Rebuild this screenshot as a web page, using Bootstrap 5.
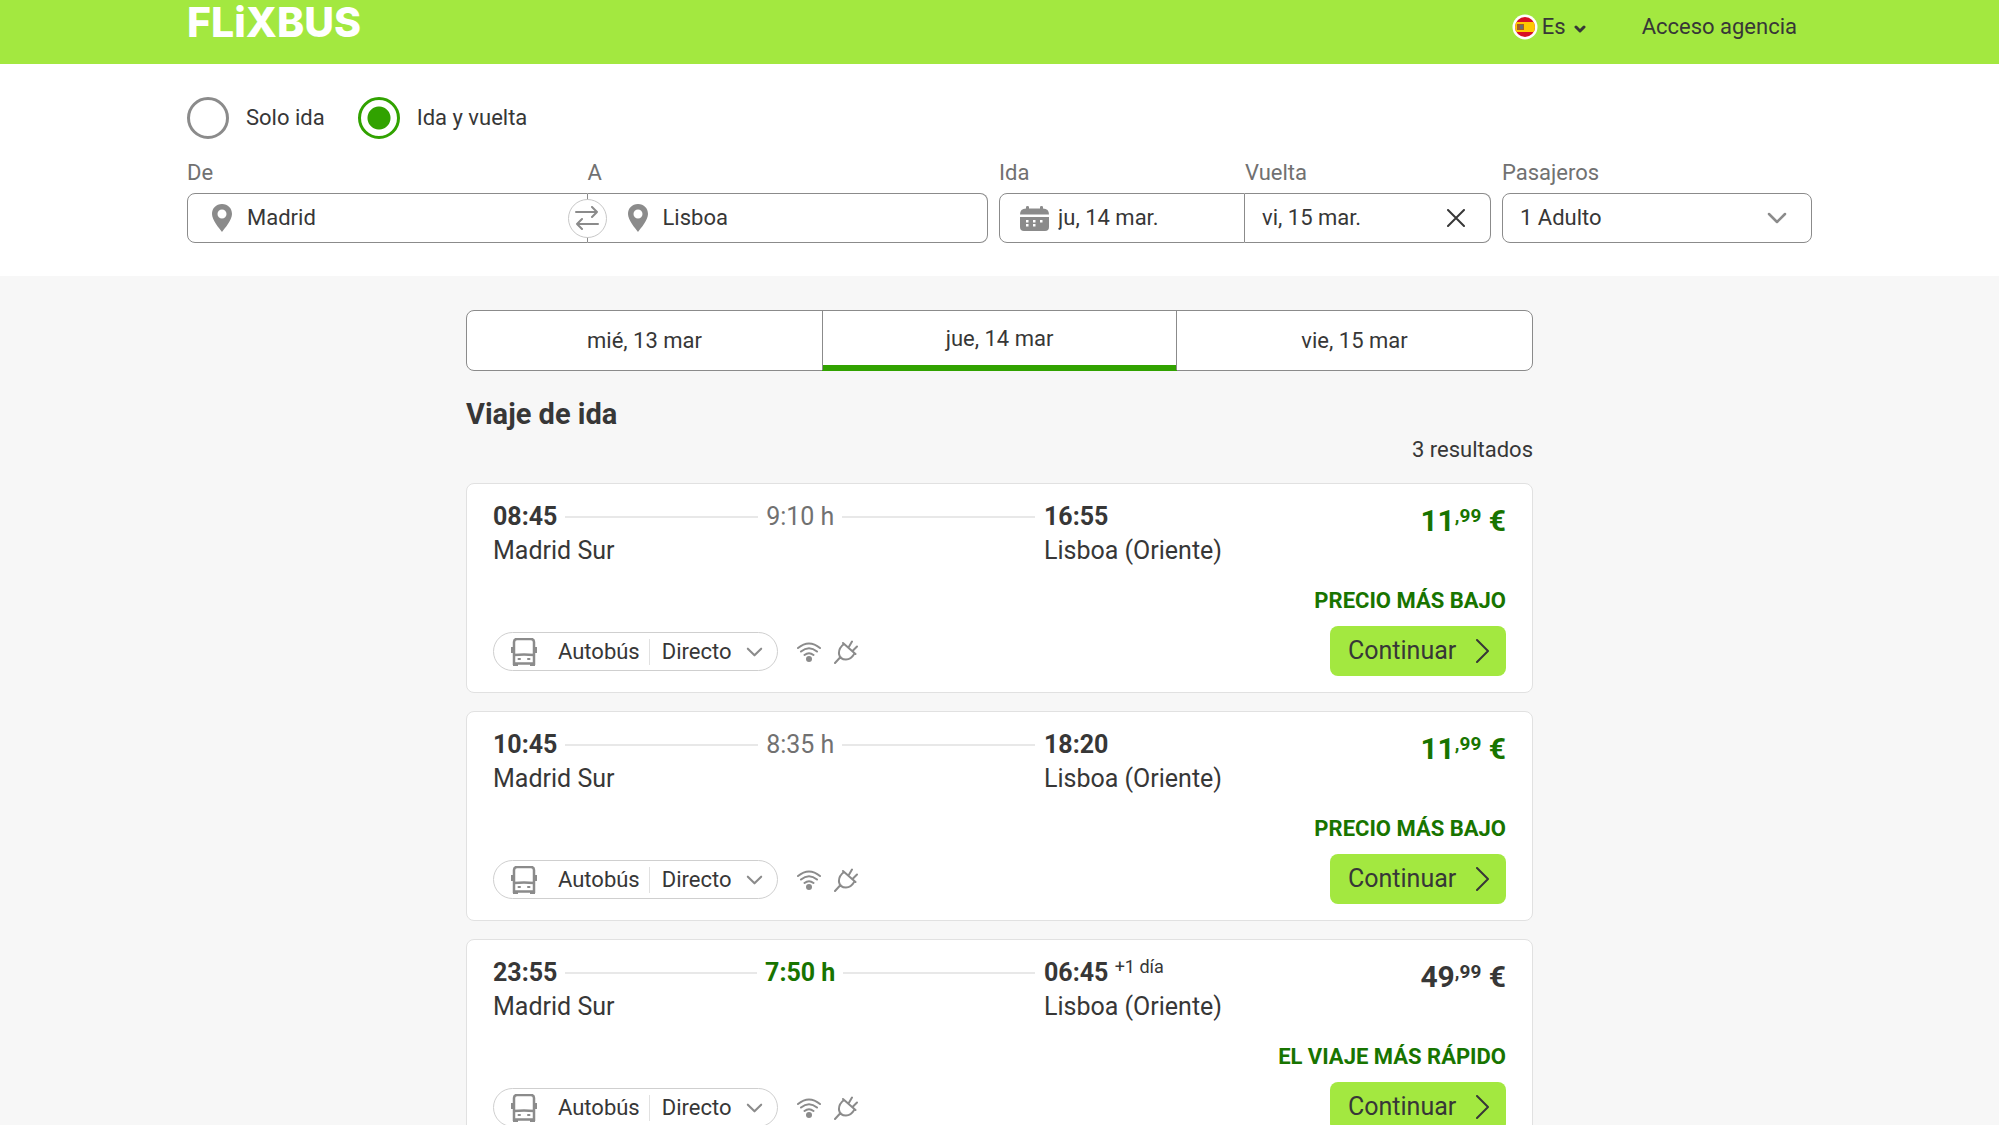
<!DOCTYPE html>
<html lang="es">
<head>
<meta charset="utf-8">
<meta name="viewport" content="width=device-width, initial-scale=1">
<title>FlixBus: Madrid – Lisboa</title>
<link href="https://cdn.jsdelivr.net/npm/bootstrap@5.3.0/dist/css/bootstrap.min.css" rel="stylesheet">
<style>
:root {
  --ink: #373737;
  --muted: #717171;
  --icon: #8b8b8b;
  --lime: #a3e840;
  --green: #31a200;
  --deep: #187400;
  --hairline: #e1e1e1;
}
html { scrollbar-width: none; }
body { font-family: Roboto, "Liberation Sans", sans-serif; font-size: 22px; line-height: 30px; color: var(--ink); background: #f7f7f7; }
svg { display: block; flex: none; fill: none; stroke: currentColor; stroke-linecap: round; stroke-linejoin: round; }
.page-width { width: 100%; max-width: 1625px; margin-inline: auto; }
.results-width { width: 100%; max-width: 1067px; margin-inline: auto; }

.topbar { background: var(--lime); height: 64px; padding: 0; }
.brand { font: 800 41px/44px Inter, "Open Sans", sans-serif; color: #fff; text-decoration: none; }
.topbar-links { gap: 56px; padding: 12px 15px 0 0; }
.topbar-links a { color: var(--ink); text-decoration: none; }

.search-panel { background: #fff; padding: 33px 0 33px; }
.trips { gap: 33px; }
.trip-radio { width: 42px; height: 42px; margin: 0 17px 0 0; border: 3px solid var(--icon); }
.trip-radio:checked { background: radial-gradient(circle, var(--green) 11px, #fff 12px); border-color: var(--green); }
.fields { display: grid; grid-template-columns: 801fr 492fr 310fr; gap: 11px; margin-top: 19px; }
.fields label { color: var(--muted); display: block; margin-bottom: 5px; }
.pair { display: grid; grid-template-columns: 1fr 1fr; }
.cell { position: relative; display: flex; align-items: center; height: 50px; border: 1px solid var(--icon); border-radius: 8px; background: #fff; }
.pair > div:first-child .cell { border-radius: 8px 0 0 8px; }
.pair > div:last-child .cell { border-radius: 0 8px 8px 0; border-left: 0; }
.cell .form-control, .cell .form-select { border: 0; background: none; padding: 0; font-size: 22px; line-height: 30px; color: var(--ink); min-width: 0; }
.cell svg { color: var(--icon); }
.place { padding-left: 24px; gap: 15px; }
.pair > div:last-child .place { padding-left: 40px; }
.date-cell { padding-left: 20px; gap: 9px; }
.date-cell.back { padding-left: 17px; padding-right: 25px; }
.swap { position: absolute; right: -20px; z-index: 2; width: 39px; height: 39px; border-radius: 50%; border: 1px solid #c8c8c8; background: #fff; padding: 0; display: grid; place-items: center; }
.clear { border: 0; background: none; padding: 0; }
.clear svg { color: var(--ink); }
.cell .pax { padding-left: 17px; height: 48px; }
.pax-arrow { position: absolute; right: 24px; pointer-events: none; }

.days { margin-top: 34px; height: 61px; display: grid; grid-template-columns: repeat(3, 1fr); border: 1px solid var(--icon); border-radius: 8px; background: #fff; }
.days button { border: 0; background: none; color: var(--ink); padding: 0; }
.days .current { border: solid var(--icon); border-width: 0 1px; box-shadow: inset 0 -5px var(--green), 0 1px var(--green); padding-bottom: 4px; }
.leg-title { font-size: 29px; line-height: 36px; font-weight: 700; margin: 25px 0 0; }
.count { text-align: right; margin: 3px 0 18px; }

.trip { display: grid; grid-template-columns: 551fr 462fr; padding: 16px 26px; height: 210px; margin-bottom: 18px; background: #fff; border: 1px solid var(--hairline); border-radius: 8px; font-size: 25px; line-height: 34px; }
.trip strong { font-weight: 700; }
.leg { gap: 8px; padding-right: 9px; }
.leg::before { content: ""; order: 1; flex: 1; height: 2px; background: #e8e8e8; }
.leg::after { content: ""; order: 3; flex: 1; height: 2px; background: #e8e8e8; }
.duration { order: 2; color: var(--muted); }
.fastest { color: var(--deep); font-weight: 700; }
.plus-day { font-size: 18px; line-height: 1; vertical-align: 8px; }
.price { font-size: 30px; line-height: 42px; font-weight: 700; }
.price span { font-size: 19px; line-height: 1; vertical-align: 9px; }
.tag { font-size: 22px; line-height: 30px; font-weight: 700; color: var(--deep); text-transform: uppercase; margin-bottom: 10px; }
.low { color: var(--deep); }
.go { display: flex; align-items: center; justify-content: space-between; width: 176px; height: 50px; padding: 0 17px 0 18px; border: 0; border-radius: 8px; background: var(--lime); color: var(--ink); font-size: 25px; }
.amenities { gap: 13px; color: var(--icon); margin-bottom: 5px; }
.mode { display: flex; align-items: center; height: 39px; padding: 0 14px 0 17px; border: 1px solid #cfcfcf; border-radius: 20px; background: none; color: var(--ink); font-size: 22px; margin-right: 6px; }
.mode svg { color: var(--icon); }
.mode .kind { margin: 0 9px 0 21px; }
.mode .direct { border-left: 1px solid var(--hairline); padding: 0 15px 0 12px; line-height: 26px; }
@media (max-width: 1100px) { .fields { grid-template-columns: 1fr; } .page-width, .results-width { padding-inline: 16px; } }
</style>
<script src="https://cdn.jsdelivr.net/npm/bootstrap@5.3.0/dist/js/bootstrap.bundle.min.js"></script>
</head>
<body>
<svg width="0" height="0" class="position-absolute" aria-hidden="true">
  <symbol id="pin" viewBox="0 0 20 28"><path fill="currentColor" stroke="none" fill-rule="evenodd" d="M10 0C4 0 0 4.400 0 10c0 6 7 14 10 18 3-4 10-12 10-18C20 4.400 16 0 10 0Zm0 5.500a4.500 4.500 0 1 1 0 9 4.500 4.500 0 0 1 0-9Z"/></symbol>
  <symbol id="bus" viewBox="0 0 26 28"><path stroke-width="2.500" stroke-linecap="butt" d="M3 27V4q0-3 3-3h14q3 0 3 3v23M3 17q10-1 20 0M3 25.500h20"/><path stroke-width="3" stroke-linecap="butt" d="M1.500 9v6M24.500 9v6M2 26.500h5M19 26.500h5"/><path stroke-width="2" d="M7.500 21h1.500M17 21h1.500"/></symbol>
  <symbol id="wifi" viewBox="0 0 24 20"><path stroke-width="2" d="M1 6q11-9 22 0M4 9.500q8-6.500 16 0M7.500 13q4.500-3.500 9 0"/><circle cx="12" cy="17" r="3" fill="currentColor" stroke="none"/></symbol>
  <symbol id="plug" viewBox="0 0 24 24"><path stroke-width="2" d="m1 23 5.500-6M9 3l12.500 11M10 4Q4.500 8 5 14q1 5.500 7 5.500 5 0 8.500-6M14.500 7.500 18 1.500M18.500 11 23 6.500"/></symbol>
  <symbol id="down" viewBox="0 0 20 12"><path stroke-width="2.500" d="m2 2 8 8 8-8"/></symbol>
  <symbol id="next" viewBox="0 0 13 24"><path stroke-width="2" d="m1 1 11 11L1 23"/></symbol>
</svg>

<header class="topbar">
  <div class="page-width d-flex justify-content-between align-items-start">
    <a href="#" class="brand" aria-label="FlixBus">FLiXBUS</a>
    <nav class="topbar-links d-flex">
      <a href="#" class="d-flex align-items-center">
        <svg width="26" height="26" viewBox="0 0 26 26" class="me-1" aria-hidden="true" stroke="none">
          <clipPath id="round"><circle cx="13" cy="13" r="10"/></clipPath>
          <circle cx="13" cy="13" r="12.500" fill="#fff" stroke="none"/>
          <g clip-path="url(#round)" stroke="none"><path fill="#d80f24" d="M0 0h26v26H0z"/><path fill="#ffc800" d="M0 8h26v10H0z"/><path fill="#a65b28" d="M5 10h7v6H5z"/><path fill="#6c6c70" d="M8 11h3v4H8z"/></g>
        </svg>
        Es
        <svg width="12" height="9" viewBox="0 0 12 9" class="ms-2 mt-1" aria-hidden="true"><path stroke-width="3" d="m2 2 4 4 4-4"/></svg>
      </a>
      <a href="#">Acceso agencia</a>
    </nav>
  </div>
</header>

<form class="search-panel">
  <div class="page-width">
    <div class="trips d-flex">
      <div class="d-flex align-items-center">
        <input class="form-check-input trip-radio" type="radio" name="viaje" id="solo"><label for="solo">Solo ida</label>
      </div>
      <div class="d-flex align-items-center">
        <input class="form-check-input trip-radio" type="radio" name="viaje" id="vuelta" checked><label for="vuelta">Ida y vuelta</label>
      </div>
    </div>
    <div class="fields">
      <div class="pair">
        <div><label for="from">De</label>
          <div class="cell place"><svg width="20" height="28"><use href="#pin"/></svg><input class="form-control" id="from" type="text" value="Madrid">
            <button type="button" class="swap" aria-label="Intercambiar"><svg width="24" height="24" viewBox="0 0 24 24"><path stroke-width="2" d="M1 6h21M17 1l5 5-5 5M23 18H2M7 13l-5 5 5 5"/></svg></button>
          </div>
        </div>
        <div><label for="to">A</label>
          <div class="cell place"><svg width="20" height="28"><use href="#pin"/></svg><input class="form-control" id="to" type="text" value="Lisboa"></div>
        </div>
      </div>
      <div class="pair">
        <div><label for="out">Ida</label>
          <div class="cell date-cell"><svg width="29" height="25" viewBox="0 0 29 25"><path fill="currentColor" stroke="none" fill-rule="evenodd" d="M0 8.500Q0 2.500 6 2.500V1q0-1 1.500-1T9 1v1.500h11V1q0-1 1.500-1T23 1v1.500q6 0 6 6ZM0 11h29v10q0 4-4 4H4q-4 0-4-4Zm6 3v2.500h2.500V14Zm7 0v2.500h2.500V14Zm7 0v2.500h2.500V14ZM6 18v2.500h2.500V18Zm7 0v2.500h2.500V18Z"/></svg><input class="form-control" id="out" type="text" value="ju, 14 mar."></div>
        </div>
        <div><label for="back">Vuelta</label>
          <div class="cell date-cell back"><input class="form-control" id="back" type="text" value="vi, 15 mar."><button type="button" class="clear" aria-label="Borrar"><svg width="18" height="18" viewBox="0 0 18 18"><path stroke-width="2" d="m1 1 16 16M17 1 1 17"/></svg></button></div>
        </div>
      </div>
      <div><label for="pax">Pasajeros</label>
        <div class="cell"><select class="form-select pax" id="pax"><option>1 Adulto</option></select><svg class="pax-arrow" width="20" height="12"><use href="#down"/></svg></div>
      </div>
    </div>
  </div>
</form>

<main class="results-width">
  <div class="days">
    <button type="button">mié, 13 mar</button><button type="button" class="current">jue, 14 mar</button><button type="button">vie, 15 mar</button>
  </div>
  <h1 class="leg-title">Viaje de ida</h1>
  <p class="count">3 resultados</p>

  <article class="trip">
    <div class="d-flex flex-column justify-content-between">
      <div>
        <div class="leg d-flex align-items-center"><strong>08:45</strong><span class="duration">9:10 h</span></div>
        <div>Madrid Sur</div>
      </div>
      <div class="amenities d-flex align-items-center">
        <button type="button" class="mode"><svg width="26" height="28"><use href="#bus"/></svg><span class="kind">Autobús</span><span class="direct">Directo</span><svg width="17" height="10"><use href="#down"/></svg></button>
        <svg width="24" height="20"><use href="#wifi"/></svg><svg width="24" height="24"><use href="#plug"/></svg>
      </div>
    </div>
    <div class="d-flex justify-content-between">
      <div><div><strong>16:55</strong></div><div>Lisboa (Oriente)</div></div>
      <div class="d-flex flex-column align-items-end">
        <div class="price low">11<span>,99</span> €</div>
        <div class="tag mt-auto">Precio más bajo</div>
        <button type="button" class="go">Continuar<svg width="13" height="24"><use href="#next"/></svg></button>
      </div>
    </div>
  </article>

  <article class="trip">
    <div class="d-flex flex-column justify-content-between">
      <div>
        <div class="leg d-flex align-items-center"><strong>10:45</strong><span class="duration">8:35 h</span></div>
        <div>Madrid Sur</div>
      </div>
      <div class="amenities d-flex align-items-center">
        <button type="button" class="mode"><svg width="26" height="28"><use href="#bus"/></svg><span class="kind">Autobús</span><span class="direct">Directo</span><svg width="17" height="10"><use href="#down"/></svg></button>
        <svg width="24" height="20"><use href="#wifi"/></svg><svg width="24" height="24"><use href="#plug"/></svg>
      </div>
    </div>
    <div class="d-flex justify-content-between">
      <div><div><strong>18:20</strong></div><div>Lisboa (Oriente)</div></div>
      <div class="d-flex flex-column align-items-end">
        <div class="price low">11<span>,99</span> €</div>
        <div class="tag mt-auto">Precio más bajo</div>
        <button type="button" class="go">Continuar<svg width="13" height="24"><use href="#next"/></svg></button>
      </div>
    </div>
  </article>

  <article class="trip">
    <div class="d-flex flex-column justify-content-between">
      <div>
        <div class="leg d-flex align-items-center"><strong>23:55</strong><span class="duration fastest">7:50 h</span></div>
        <div>Madrid Sur</div>
      </div>
      <div class="amenities d-flex align-items-center">
        <button type="button" class="mode"><svg width="26" height="28"><use href="#bus"/></svg><span class="kind">Autobús</span><span class="direct">Directo</span><svg width="17" height="10"><use href="#down"/></svg></button>
        <svg width="24" height="20"><use href="#wifi"/></svg><svg width="24" height="24"><use href="#plug"/></svg>
      </div>
    </div>
    <div class="d-flex justify-content-between">
      <div><div><strong>06:45</strong> <span class="plus-day">+1 día</span></div><div>Lisboa (Oriente)</div></div>
      <div class="d-flex flex-column align-items-end">
        <div class="price">49<span>,99</span> €</div>
        <div class="tag mt-auto">El viaje más rápido</div>
        <button type="button" class="go">Continuar<svg width="13" height="24"><use href="#next"/></svg></button>
      </div>
    </div>
  </article>
</main>
</body>
</html>
